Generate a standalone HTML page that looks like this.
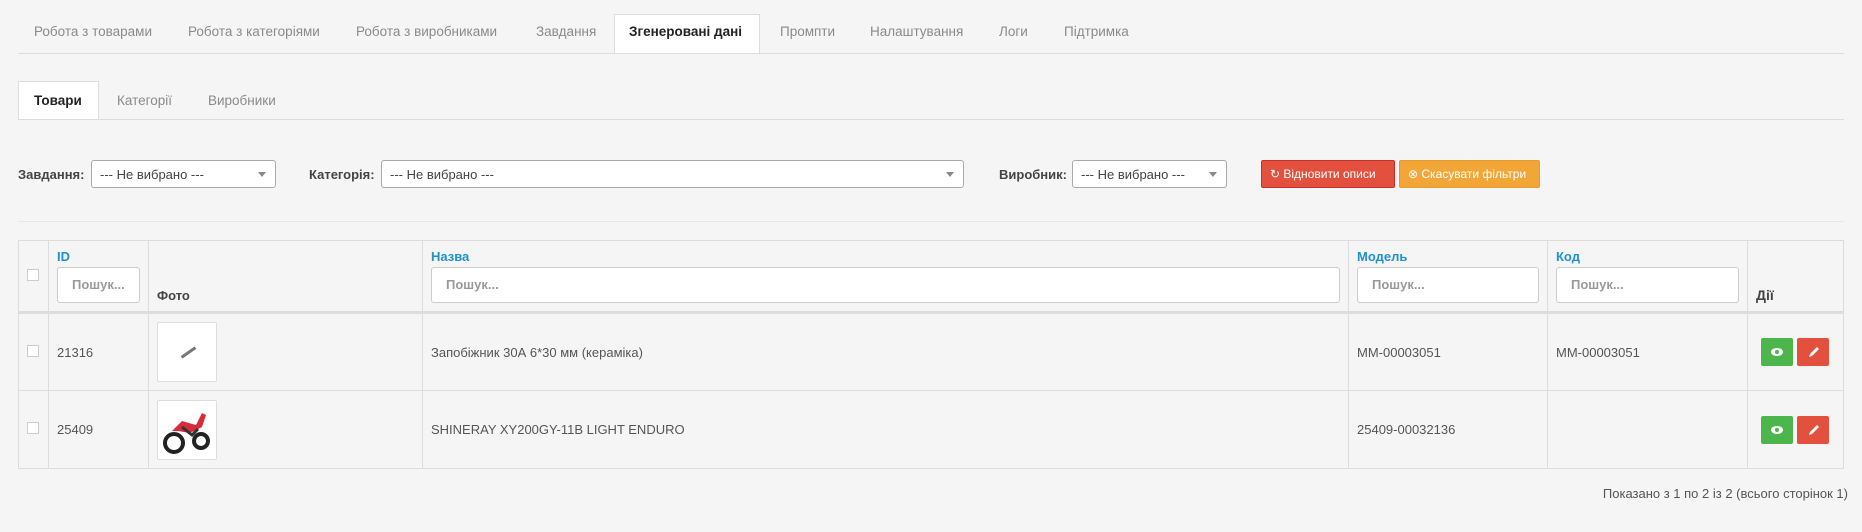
<!DOCTYPE html>
<html><head><meta charset="utf-8"><style>
*{box-sizing:border-box;margin:0;padding:0}
body{width:1862px;height:532px;background:#f5f5f5;font-family:"Liberation Sans",sans-serif;font-size:13px;color:#555;position:relative;overflow:hidden}
.a{position:absolute;white-space:nowrap}
.tabs{position:absolute;left:18px;right:18px;top:53px;border-top:1px solid #ddd}
.tab{position:absolute;top:24px;font-size:13.5px;color:#8a8a8a;white-space:nowrap}
.act{position:absolute;background:#fff;border:1px solid #ddd;border-bottom:none}
.lbl{position:absolute;font-weight:bold;color:#444;font-size:13px}
.sel{position:absolute;background:#fff;border:1px solid #aaa;border-radius:3px;height:28px;padding:6px 8px;font-size:13px;color:#444;white-space:nowrap}
.sel:after{content:"";position:absolute;right:9px;top:11px;border:4px solid transparent;border-top:5px solid #888}
.btn{position:absolute;height:28px;color:#fff;font-size:12px;padding:6px 8px;border-radius:2px;white-space:nowrap;overflow:hidden}
table{position:absolute;left:18px;top:240px;width:1826px;border-collapse:collapse}
td,th{border:1px solid #ddd;vertical-align:middle;text-align:left;padding:0 8px}
th{height:72px;vertical-align:bottom;padding-bottom:8px;border-bottom:3px solid #ddd}
th b{display:block;color:#1e91cf;font-size:13px;margin-bottom:3px}
.inp{background:#fff;border:1px solid #ccc;border-radius:3px;height:36px;padding:9px 14px;color:#999;font-weight:bold;font-size:13px;white-space:nowrap;overflow:hidden}
.cb{display:inline-block;width:12px;height:12px;border:1px solid #ccc;background:#fff}
tr.r td{height:78px}
.th{width:60px;height:60px;background:#fff;border:1px solid #ddd;border-radius:2px;position:relative}
.ab{display:inline-block;width:32px;height:28px;border-radius:2px;vertical-align:middle;position:relative}
</style></head><body>
<div class="act" style="left:614px;top:14px;width:146px;height:40px"></div>
<div class="tabs"></div>
<div class="tab" style="left:34px">Робота з товарами</div>
<div class="tab" style="left:188px">Робота з категоріями</div>
<div class="tab" style="left:356px">Робота з виробниками</div>
<div class="tab" style="left:536px">Завдання</div>
<div class="tab" style="left:629px;color:#222;font-weight:bold">Згенеровані дані</div>
<div class="tab" style="left:780px">Промпти</div>
<div class="tab" style="left:870px">Налаштування</div>
<div class="tab" style="left:999px">Логи</div>
<div class="tab" style="left:1064px">Підтримка</div>

<div class="act" style="left:18px;top:81px;width:81px;height:39px"></div>
<div class="a" style="left:18px;right:18px;top:119px;border-top:1px solid #ddd"></div>
<div class="tab" style="left:34px;top:93px;color:#222;font-weight:bold">Товари</div>
<div class="tab" style="left:117px;top:93px">Категорії</div>
<div class="tab" style="left:208px;top:93px">Виробники</div>

<div class="lbl" style="left:18px;top:167px">Завдання:</div>
<div class="sel" style="left:91px;top:160px;width:185px">--- Не вибрано ---</div>
<div class="lbl" style="left:309px;top:167px">Категорія:</div>
<div class="sel" style="left:381px;top:160px;width:583px">--- Не вибрано ---</div>
<div class="lbl" style="left:999px;top:167px">Виробник:</div>
<div class="sel" style="left:1072px;top:160px;width:155px">--- Не вибрано ---</div>
<div class="btn" style="left:1261px;top:160px;width:134px;background:#e3503e;border:1px solid #c9302c">↻ Відновити описи</div>
<div class="btn" style="left:1399px;top:160px;width:141px;background:#f3a638;border:1px solid #e89a2b">⊗ Скасувати фільтри</div>
<div class="a" style="left:18px;right:18px;top:221px;border-top:1px solid #e8e8e8"></div>

<table>
<tr><th style="width:30px;vertical-align:middle;padding-bottom:0"><span class="cb"></span></th>
<th style="width:100px"><b>ID</b><div class="inp">Пошук...</div></th>
<th style="width:274px;color:#444">Фото</th>
<th style="width:926px"><b>Назва</b><div class="inp">Пошук...</div></th>
<th style="width:199px"><b>Модель</b><div class="inp">Пошук...</div></th>
<th style="width:200px"><b>Код</b><div class="inp">Пошук...</div></th>
<th style="color:#444;font-size:14px">Дії</th></tr>
<tr class="r"><td><span class="cb"></span></td><td>21316</td><td><div class="th"><div class="a" style="left:22px;top:28px;width:17px;height:3px;background:#777;transform:rotate(-35deg)"></div></div></td><td>Запобіжник 30А 6*30 мм (кераміка)</td><td>MM-00003051</td><td>MM-00003051</td><td style="padding-left:13px"><span class="ab" style="background:#4cb64c">
<svg width="32" height="28" viewBox="0 0 32 28"><ellipse cx="16" cy="14" rx="6" ry="4" fill="#fff"/><circle cx="16" cy="14" r="2" fill="#4cb64c"/></svg></span> <span class="ab" style="background:#e3503e"><svg width="32" height="28" viewBox="0 0 32 28"><path d="M12 19l1-3 7-7 2 2-7 7z" fill="#fff"/></svg></span></td></tr>
<tr class="r"><td><span class="cb"></span></td><td>25409</td><td><div class="th"><svg width="58" height="58" viewBox="0 0 58 58"><circle cx="16" cy="42" r="9" fill="none" stroke="#222" stroke-width="4"/><circle cx="43" cy="40" r="7" fill="none" stroke="#222" stroke-width="4"/><path d="M14 30l10-10 14 4 6-12 4 2-4 12-12 6-12-2z" fill="#d62b3a"/><path d="M24 26l10 8 6-6" stroke="#333" stroke-width="3" fill="none"/></svg></div></td><td>SHINERAY XY200GY-11B LIGHT ENDURO</td><td>25409-00032136</td><td></td><td style="padding-left:13px"><span class="ab" style="background:#4cb64c"><svg width="32" height="28" viewBox="0 0 32 28"><ellipse cx="16" cy="14" rx="6" ry="4" fill="#fff"/><circle cx="16" cy="14" r="2" fill="#4cb64c"/></svg></span> <span class="ab" style="background:#e3503e"><svg width="32" height="28" viewBox="0 0 32 28"><path d="M12 19l1-3 7-7 2 2-7 7z" fill="#fff"/></svg></span></td></tr>
</table>
<div class="a" style="right:14px;top:486px;font-size:13px;color:#555">Показано з 1 по 2 із 2 (всього сторінок 1)</div>
</body></html>
